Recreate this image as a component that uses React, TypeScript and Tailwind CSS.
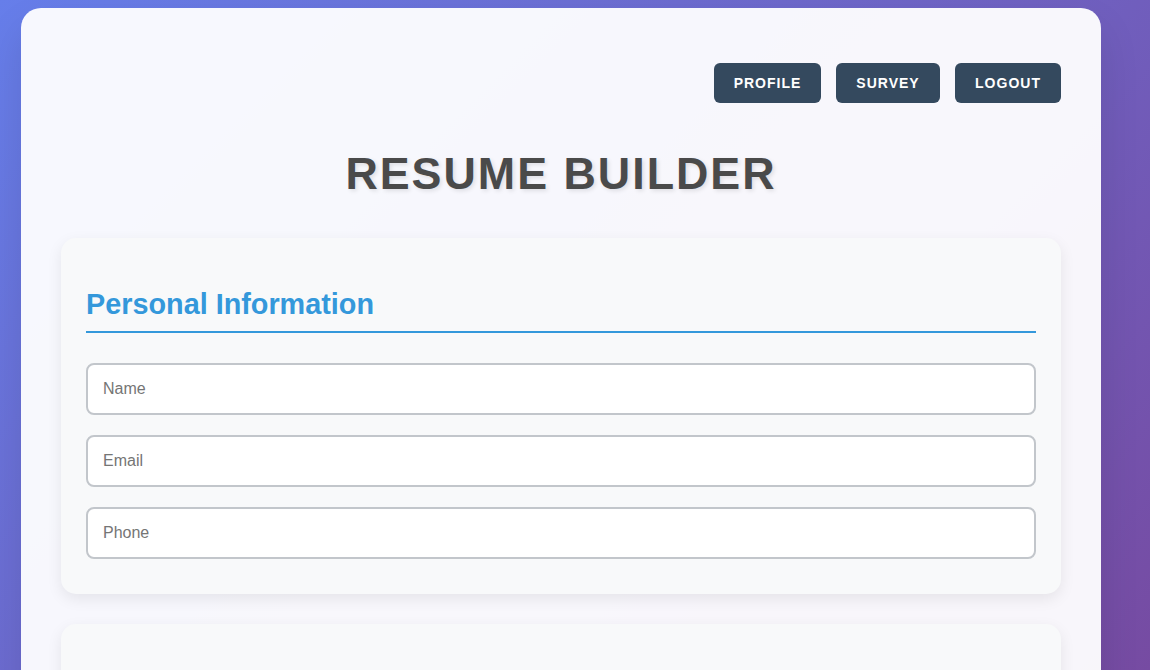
import React from "react";

export default function App() {
  const font = { fontFamily: '"Liberation Sans", Arial, sans-serif' };
  return (
    <div
      className="min-h-[670px] h-[670px] overflow-hidden bg-[linear-gradient(135deg,#667eea_0%,#764ba2_100%)] pt-[8px] pl-[21px]"
      style={font}
    >
      <div className="w-[1080px] rounded-[20px] bg-white/95 px-[40px] pt-[55px] pb-[40px] shadow-[0_20px_40px_rgba(0,0,0,0.1)]">
        <div className="flex justify-end gap-[15px]">
          <button className="h-[40px] w-[107px] rounded-[6px] bg-[#34495e] text-[14px] font-bold tracking-[1px] text-white">
            PROFILE
          </button>
          <button className="h-[40px] w-[104px] rounded-[6px] bg-[#34495e] text-[14px] font-bold tracking-[1px] text-white">
            SURVEY
          </button>
          <button className="h-[40px] w-[106px] rounded-[6px] bg-[#34495e] text-[14px] font-bold tracking-[1px] text-white">
            LOGOUT
          </button>
        </div>
        <h1 className="mt-[44px] text-center text-[44.8px] font-bold leading-[52px] tracking-[2px] text-[#4a4a4a] [text-shadow:2px_2px_4px_rgba(0,0,0,0.1)]">
          RESUME BUILDER
        </h1>
        <div className="mt-[39px] rounded-[15px] bg-[#f8f9fa] px-[25px] pt-[50px] pb-[35px] shadow-[0_5px_15px_rgba(0,0,0,0.08)]">
          <h2 className="border-b-2 border-[#3498db] pb-[10px] text-[28.8px] font-bold leading-[33px] text-[#3498db]">
            Personal Information
          </h2>
          <div className="mt-[30px] flex flex-col gap-[20px]">
            {["Name", "Email", "Phone"].map((p) => (
              <input
                key={p}
                placeholder={p}
                className="h-[52px] w-full rounded-[8px] border-2 border-[#c2c6cb] bg-white px-[15px] text-[16px] text-[#333] placeholder:text-[#757575] outline-none"
                style={font}
              />
            ))}
          </div>
        </div>
        <div className="mt-[30px] h-[300px] rounded-[15px] bg-[#f8f9fa] shadow-[0_5px_15px_rgba(0,0,0,0.08)]" />
      </div>
    </div>
  );
}
